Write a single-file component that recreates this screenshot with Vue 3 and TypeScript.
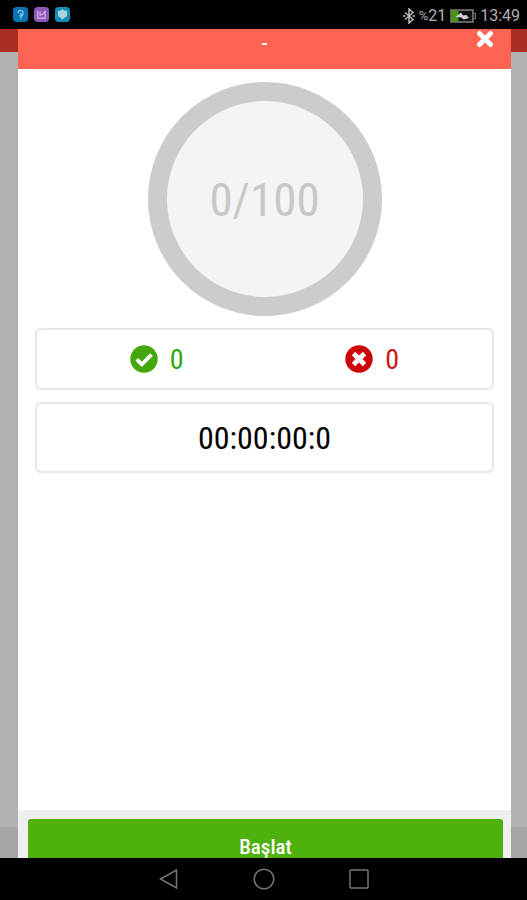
<script setup lang="ts">
import { computed, ref } from 'vue'

const title = ref<string>('-')
const total = ref<number>(100)
const correct = ref<number>(0)
const wrong = ref<number>(0)
const elapsed = ref<string>('00:00:00:0')
const answered = computed<string>(() => `${correct.value + wrong.value}/${total.value}`)
</script>

<template>
  <div class="screen">
    <header class="status">
      <div class="apps">
        <svg class="app" viewBox="0 0 16 16" aria-hidden="true">
          <rect width="16" height="16" rx="4" fill="#0874b5" />
          <path d="M5.500 6.500a2.700 2.700 0 1 1 3.300 2.400M8.500 6v7M6.500 9.500h4" fill="none" stroke="#7fc0de" stroke-width="1.300" />
        </svg>
        <svg class="app" viewBox="0 0 16 16" aria-hidden="true">
          <rect width="16" height="16" rx="4" fill="#8d58b8" />
          <path d="M4 4v8h8V4M6.500 4.500v4.500l3-1.500 2.500-3" fill="none" stroke="#cda6df" stroke-width="1.400" />
        </svg>
        <svg class="app" viewBox="0 0 16 16" aria-hidden="true">
          <rect width="16" height="16" rx="4" fill="#168bb5" />
          <path d="M8 2.500l2 1.200 2.500.3.500 3-.5 3-2.500 1.500L8 13.500 6 11.500 3.500 10 3 7l.5-3L6 3.700z" fill="#a9d3da" />
        </svg>
      </div>
      <div class="system">
        <svg class="bluetooth" viewBox="0 0 12 16" aria-hidden="true">
          <path d="M2 4.500l8 7L6 15V1l4 3.500-8 7M0 8h2.500M9.500 8H12" fill="none" stroke="#b5b5b5" stroke-width="1.600" />
        </svg>
        <span class="level"><small>%</small>21</span>
        <svg class="battery" viewBox="0 0 26 14" aria-hidden="true">
          <rect x="1" y="1" width="22" height="12" fill="#111" stroke="#8b8b8b" stroke-width="1.400" />
          <rect x="1.500" y="1.500" width="7" height="11" fill="#4a951b" />
          <path d="M24 4.500h1.500v5H24" fill="none" stroke="#8b8b8b" />
          <path d="M5.500 8L11 3.500l2 3 3.500-.5L19 9l-5.500 1.500-2-2z" fill="#d0d0d0" />
        </svg>
        <time>13:49</time>
      </div>
    </header>

    <div class="stage">
      <div class="backdrop" aria-hidden="true">
        <div class="backdrop-top"></div>
        <div class="backdrop-bottom"></div>
      </div>

      <section class="modal" role="dialog" aria-modal="true" aria-labelledby="modal-title">
        <header class="modal-head">
          <h1 id="modal-title">{{ title }}</h1>
          <button class="close" type="button" aria-label="Kapat">
            <svg viewBox="0 0 18 18" aria-hidden="true">
              <path d="M3.500 3.500l11 11M14.500 3.500l-11 11" stroke="#fff" stroke-width="5" stroke-linecap="round" />
            </svg>
          </button>
        </header>

        <main class="content">
          <div class="dial">{{ answered }}</div>

          <div class="card scores">
            <div class="score right">
              <svg viewBox="0 0 28 28" aria-hidden="true">
                <circle cx="14" cy="14" r="13.700" fill="#42a80c" />
                <path d="M6.800 14.300l5 5L21.500 9.700" fill="none" stroke="#fff" stroke-width="3.800" />
              </svg>
              <span>{{ correct }}</span>
            </div>
            <div class="score wrong">
              <svg viewBox="0 0 28 28" aria-hidden="true">
                <circle cx="14" cy="14" r="13.700" fill="#cc0709" />
                <path d="M8.500 8.500l11 11M19.500 8.500l-11 11" stroke="#fff" stroke-width="4.800" />
              </svg>
              <span>{{ wrong }}</span>
            </div>
          </div>

          <div class="card timer">{{ elapsed }}</div>
        </main>

        <footer class="modal-foot">
          <button class="start" type="button">Başlat</button>
        </footer>
      </section>
    </div>

    <nav class="keys">
      <button type="button" aria-label="Geri">
        <svg viewBox="0 0 22 22"><path d="M18.500 2v18L2.500 11z" /></svg>
      </button>
      <button type="button" aria-label="Ana ekran">
        <svg viewBox="0 0 22 22"><circle cx="11" cy="11" r="9.800" /></svg>
      </button>
      <button type="button" aria-label="Son uygulamalar">
        <svg viewBox="0 0 22 22"><rect x="2" y="2" width="18" height="18" rx="1" /></svg>
      </button>
    </nav>
  </div>
</template>

<style>
body {
  margin: 0;
  background: #000;
}
</style>

<style scoped>
.screen {
  display: flex;
  flex-direction: column;
  height: 100vh;
  background: #000;
  font-family: "Roboto Condensed", Roboto, sans-serif;
}

button {
  display: flex;
  align-items: center;
  justify-content: center;
  padding: 0;
  border: 0;
  background: none;
  font-family: inherit;
}

svg {
  display: block;
}

.status {
  display: flex;
  align-items: center;
  justify-content: space-between;
  height: 29px;
  padding: 0 7px 0 13px;
  color: #b0b0b0;
  font-family: Roboto, sans-serif;
  font-size: 16px;
}

.apps {
  display: flex;
  gap: 6px;
}

.app {
  width: 15px;
  height: 15px;
}

.system {
  display: flex;
  align-items: center;
  gap: 4px;
  padding-top: 2px;
}

.bluetooth {
  width: 12px;
  height: 16px;
}

.level small {
  font-size: 13px;
  vertical-align: 1px;
}

.battery {
  width: 26px;
  height: 14px;
}

.stage {
  display: grid;
  grid-template: minmax(0, 1fr) / minmax(0, 1fr);
  flex: 1;
  min-height: 0;
  overflow: hidden;
}

.backdrop,
.modal {
  grid-area: 1 / 1;
}

.backdrop {
  display: flex;
  flex-direction: column;
  justify-content: space-between;
  background: #b1b1b1;
}

.backdrop-top {
  height: 23px;
  background: #a82e23;
}

.backdrop-bottom {
  height: 31px;
  background: #a6a6a6;
}

.modal {
  display: flex;
  flex-direction: column;
  margin: 0 16px -28px 18px;
  background: #fff;
}

.modal-head {
  display: grid;
  grid-template-columns: 52px 1fr 52px;
  height: 40px;
  background: #ff6351;
  color: #fff;
}

.modal-head h1 {
  grid-column: 2;
  margin: 0;
  font-size: 21px;
  line-height: 28px;
  font-weight: 500;
  text-align: center;
}

.close {
  height: 20px;
}

.close svg {
  width: 18px;
  height: 18px;
}

.content {
  display: flex;
  flex: 1;
  flex-direction: column;
  gap: 12px;
  padding: 13px 17px 0;
}

.dial {
  display: flex;
  align-items: center;
  justify-content: center;
  align-self: center;
  box-sizing: border-box;
  width: 234px;
  height: 234px;
  border: 19px solid #ccc;
  border-radius: 50%;
  background: #f4f4f4;
  color: #c8c8c8;
  font-size: 47px;
}

.card {
  box-sizing: border-box;
  border: 2px solid #e6e6e6;
  border-radius: 6px;
}

.scores {
  display: grid;
  grid-template-columns: 1fr 1fr;
  height: 62px;
  padding: 0 12px;
}

.score {
  display: flex;
  align-items: center;
  justify-content: center;
  gap: 12px;
  font-size: 28px;
}

.score svg {
  width: 28px;
  height: 28px;
}

.right {
  color: #2fa812;
}

.wrong {
  color: #cc1517;
}

.timer {
  display: flex;
  align-items: center;
  justify-content: center;
  height: 71px;
  color: #000;
  font-size: 32px;
}

.modal-foot {
  padding: 9px 8px 11px 10px;
  background: #efefef;
}

.start {
  width: 100%;
  height: 56px;
  border-radius: 3px;
  background: #4eb10d;
  color: #fff;
  font-size: 21px;
  font-weight: 500;
}

.keys {
  display: flex;
  align-items: center;
  justify-content: center;
  gap: 73px;
  height: 42px;
}

.keys svg {
  width: 22px;
  height: 22px;
  fill: none;
  stroke: #777;
  stroke-width: 1.500;
}
</style>
